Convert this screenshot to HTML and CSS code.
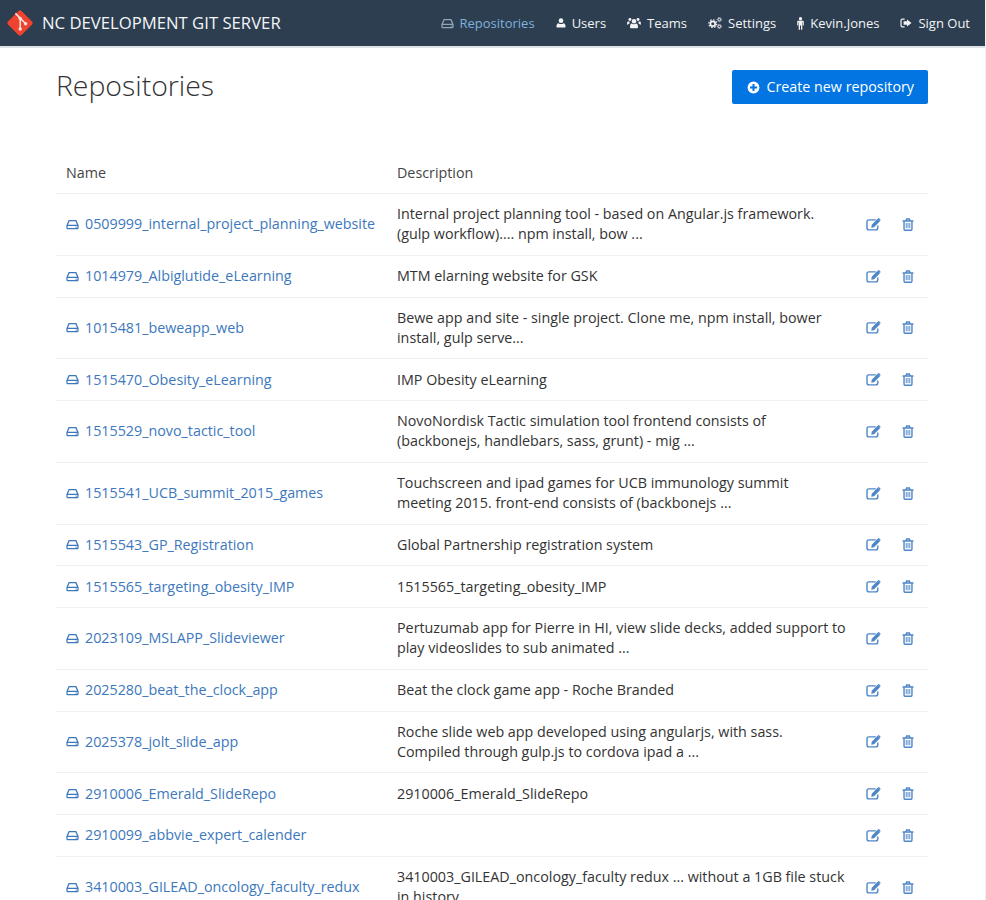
FILE: index.html
```html
<!DOCTYPE html>
<html lang="en">
<head>
<meta charset="utf-8">
<title>Repositories</title>
<link rel="stylesheet" href="styles.css">
</head>
<body>
<svg class="defs" width="0" height="0" aria-hidden="true">
  <symbol id="i-hdd" viewBox="0 0 16 14"><path fill="none" stroke="currentColor" stroke-width="1.6" d="M1 8.2 3.6 2.2h8.8L15 8.2V11.2a1.2 1.2 0 0 1-1.2 1.2H2.2A1.2 1.2 0 0 1 1 11.2zM1 8.2h14"/><circle cx="12.6" cy="10.4" r=".8" fill="currentColor"/></symbol>
  <symbol id="i-user" viewBox="0 0 14 14"><circle cx="7" cy="3.8" r="3.3" fill="currentColor"/><path fill="currentColor" d="M1.6 13.4C.9 13.4.6 12.9.6 12.2.6 9.8 1.4 7.2 3.6 7.2 4.4 8 5.6 8.5 7 8.5s2.6-.5 3.4-1.3c2.2 0 3 2.6 3 5 0 .7-.3 1.2-1 1.2z"/></symbol>
  <symbol id="i-group" viewBox="0 0 18 14"><g fill="currentColor"><circle cx="9" cy="4.6" r="2.9"/><circle cx="3.8" cy="2.6" r="1.9"/><circle cx="14.2" cy="2.6" r="1.9"/><path d="M4.8 13.6c-.7 0-1-.4-1-1 0-2.6.6-5 2.4-5 .7.6 1.7 1 2.8 1s2.1-.4 2.8-1c1.8 0 2.4 2.4 2.4 5 0 .6-.3 1-1 1z"/><path d="M.1 8.4c0-2 .4-3.6 1.4-3.6.5.4 1.3.7 2.1.7-.2.3-.4.7-.4 1.2 0 .3.1.7.2 1-1.1.4-1.9 1-2.3 1.6H.6c-.3 0-.5-.4-.5-.9zM17.9 8.4c0-2-.4-3.6-1.4-3.6-.5.4-1.3.7-2.1.7.2.3.4.7.4 1.2 0 .3-.1.7-.2 1 1.1.4 1.9 1 2.3 1.6h.4c.3 0 .6-.4.6-.9z"/></g></symbol>
  <symbol id="i-cogs" viewBox="0 0 16 14"><g fill="none" stroke="currentColor"><circle cx="5.4" cy="7.8" r="2.8" stroke-width="2"/><circle cx="5.4" cy="7.8" r="4.6" stroke-width="1.4" stroke-dasharray="1.8 1.8"/><circle cx="13" cy="3" r="1.5" stroke-width="1.1"/><circle cx="13" cy="3" r="2.5" stroke-width=".9" stroke-dasharray="1.1 1.1"/><circle cx="13" cy="11" r="1.5" stroke-width="1.1"/><circle cx="13" cy="11" r="2.5" stroke-width=".9" stroke-dasharray="1.1 1.1"/></g></symbol>
  <symbol id="i-male" viewBox="0 0 8 15"><g fill="currentColor"><circle cx="4" cy="2" r="1.9"/><path d="M1.4 4.4h5.2c.7 0 1.2.5 1.2 1.2v3.6c0 .8-1.2.8-1.2 0V6h-.5v8.2c0 1-1.5 1-1.5 0V9.8h-1.2v4.4c0 1-1.5 1-1.5 0V6h-.5v3.2c0 .8-1.2.8-1.2 0V5.6c0-.7.5-1.2 1.2-1.2z"/></g></symbol>
  <symbol id="i-signout" viewBox="0 0 14 14"><path fill="none" stroke="currentColor" stroke-width="1.4" d="M5.4 2.4H3A1.8 1.8 0 0 0 1.2 4.2v5.6A1.8 1.8 0 0 0 3 11.6h2.4"/><path fill="currentColor" d="M8.2 2.8 13.4 7l-5.2 4.2V8.9H4.2V5.1h4z"/></symbol>
  <symbol id="i-plus" viewBox="0 0 14 14"><path fill="currentColor" fill-rule="evenodd" d="M7 .6a6.4 6.4 0 1 1 0 12.8A6.4 6.4 0 0 1 7 .6zM5.9 3.2v2.7H3.2v2.2h2.7v2.7h2.2V8.1h2.7V5.9H8.1V3.2z"/></symbol>
  <symbol id="i-edit" viewBox="0 0 16 14"><path fill="none" stroke="currentColor" stroke-width="1.5" d="M12.6 8.2v2.6a2 2 0 0 1-2 2H3a2 2 0 0 1-2-2V4a2 2 0 0 1 2-2h7.4"/><path fill="currentColor" d="M12.4.9 15 3.4 8.6 9.9 5.6 10.5 6.1 7.4zM13.1.3l.7-.3 1.9 1.9-.3.7-.6.4-2.3-2.3z"/></symbol>
  <symbol id="i-trash" viewBox="0 0 13 14"><g fill="none" stroke="currentColor" stroke-width="1.5"><path d="M.6 3.2h11.8M2.2 3.2v8.6c0 .9.5 1.5 1.2 1.5h6.2c.7 0 1.2-.6 1.2-1.5V3.2M4.2 3.2 5 1.1h3l.8 2.1"/><path stroke-width="1" d="M4.6 5.4v5.6M6.5 5.4v5.6M8.4 5.4v5.6"/></g></symbol>
</svg>
<div class="page">
  <header class="navbar">
    <a class="brand" href="#">
      <svg class="brand-logo" viewBox="0 0 28 28" aria-hidden="true"><rect x="4.4" y="4.4" width="19.2" height="19.2" rx="2.2" transform="rotate(45 14 14)" fill="#f0432f"/><g fill="none" stroke="#fbe4e0" stroke-width="1.5"><path d="M9.4 4.4 20 15M14.2 9.2v11"/></g><g fill="#fbe4e0"><circle cx="14.2" cy="9.4" r="1.7"/><circle cx="14.2" cy="20" r="1.7"/><circle cx="19.6" cy="14.8" r="1.7"/></g></svg>
      <span>NC DEVELOPMENT GIT SERVER</span>
    </a>
    <nav class="nav">
      <a class="nav-link active" href="#"><svg class="ico ico-hdd"><use href="#i-hdd"/></svg>Repositories</a>
      <a class="nav-link" href="#"><svg class="ico ico-user"><use href="#i-user"/></svg>Users</a>
      <a class="nav-link" href="#"><svg class="ico ico-group"><use href="#i-group"/></svg>Teams</a>
      <a class="nav-link" href="#"><svg class="ico ico-cogs"><use href="#i-cogs"/></svg>Settings</a>
      <a class="nav-link" href="#"><svg class="ico ico-male"><use href="#i-male"/></svg>Kevin.Jones</a>
      <a class="nav-link" href="#"><svg class="ico ico-signout"><use href="#i-signout"/></svg>Sign Out</a>
    </nav>
  </header>
  <main class="content">
    <div class="title-row">
      <h1>Repositories</h1>
      <a class="btn" href="#"><svg class="ico ico-plus"><use href="#i-plus"/></svg>Create new repository</a>
    </div>
    <div class="repos">
      <div class="row head"><div class="cell">Name</div><div class="cell">Description</div><div class="cell"></div></div>
      <div class="row"><a class="cell repo" href="#"><svg class="ico ico-hdd"><use href="#i-hdd"/></svg>0509999_internal_project_planning_website</a><div class="cell desc">Internal project planning tool - based on Angular.js framework. (gulp workflow).... npm install, bow ...</div><div class="acts"><svg class="ico ico-edit"><use href="#i-edit"/></svg><svg class="ico ico-trash"><use href="#i-trash"/></svg></div></div>
      <div class="row"><a class="cell repo" href="#"><svg class="ico ico-hdd"><use href="#i-hdd"/></svg>1014979_Albiglutide_eLearning</a><div class="cell desc">MTM elarning website for GSK</div><div class="acts"><svg class="ico ico-edit"><use href="#i-edit"/></svg><svg class="ico ico-trash"><use href="#i-trash"/></svg></div></div>
      <div class="row"><a class="cell repo" href="#"><svg class="ico ico-hdd"><use href="#i-hdd"/></svg>1015481_beweapp_web</a><div class="cell desc">Bewe app and site - single project. Clone me, npm install, bower install, gulp serve...</div><div class="acts"><svg class="ico ico-edit"><use href="#i-edit"/></svg><svg class="ico ico-trash"><use href="#i-trash"/></svg></div></div>
      <div class="row"><a class="cell repo" href="#"><svg class="ico ico-hdd"><use href="#i-hdd"/></svg>1515470_Obesity_eLearning</a><div class="cell desc">IMP Obesity eLearning</div><div class="acts"><svg class="ico ico-edit"><use href="#i-edit"/></svg><svg class="ico ico-trash"><use href="#i-trash"/></svg></div></div>
      <div class="row"><a class="cell repo" href="#"><svg class="ico ico-hdd"><use href="#i-hdd"/></svg>1515529_novo_tactic_tool</a><div class="cell desc">NovoNordisk Tactic simulation tool frontend consists of (backbonejs, handlebars, sass, grunt) - mig ...</div><div class="acts"><svg class="ico ico-edit"><use href="#i-edit"/></svg><svg class="ico ico-trash"><use href="#i-trash"/></svg></div></div>
      <div class="row"><a class="cell repo" href="#"><svg class="ico ico-hdd"><use href="#i-hdd"/></svg>1515541_UCB_summit_2015_games</a><div class="cell desc">Touchscreen and ipad games for UCB immunology summit meeting 2015. front-end consists of (backbonejs ...</div><div class="acts"><svg class="ico ico-edit"><use href="#i-edit"/></svg><svg class="ico ico-trash"><use href="#i-trash"/></svg></div></div>
      <div class="row"><a class="cell repo" href="#"><svg class="ico ico-hdd"><use href="#i-hdd"/></svg>1515543_GP_Registration</a><div class="cell desc">Global Partnership registration system</div><div class="acts"><svg class="ico ico-edit"><use href="#i-edit"/></svg><svg class="ico ico-trash"><use href="#i-trash"/></svg></div></div>
      <div class="row"><a class="cell repo" href="#"><svg class="ico ico-hdd"><use href="#i-hdd"/></svg>1515565_targeting_obesity_IMP</a><div class="cell desc">1515565_targeting_obesity_IMP</div><div class="acts"><svg class="ico ico-edit"><use href="#i-edit"/></svg><svg class="ico ico-trash"><use href="#i-trash"/></svg></div></div>
      <div class="row"><a class="cell repo" href="#"><svg class="ico ico-hdd"><use href="#i-hdd"/></svg>2023109_MSLAPP_Slideviewer</a><div class="cell desc">Pertuzumab app for Pierre in HI, view slide decks, added support to play videoslides to sub animated ...</div><div class="acts"><svg class="ico ico-edit"><use href="#i-edit"/></svg><svg class="ico ico-trash"><use href="#i-trash"/></svg></div></div>
      <div class="row"><a class="cell repo" href="#"><svg class="ico ico-hdd"><use href="#i-hdd"/></svg>2025280_beat_the_clock_app</a><div class="cell desc">Beat the clock game app - Roche Branded</div><div class="acts"><svg class="ico ico-edit"><use href="#i-edit"/></svg><svg class="ico ico-trash"><use href="#i-trash"/></svg></div></div>
      <div class="row"><a class="cell repo" href="#"><svg class="ico ico-hdd"><use href="#i-hdd"/></svg>2025378_jolt_slide_app</a><div class="cell desc">Roche slide web app developed using angularjs, with sass. Compiled through gulp.js to cordova ipad a ...</div><div class="acts"><svg class="ico ico-edit"><use href="#i-edit"/></svg><svg class="ico ico-trash"><use href="#i-trash"/></svg></div></div>
      <div class="row"><a class="cell repo" href="#"><svg class="ico ico-hdd"><use href="#i-hdd"/></svg>2910006_Emerald_SlideRepo</a><div class="cell desc">2910006_Emerald_SlideRepo</div><div class="acts"><svg class="ico ico-edit"><use href="#i-edit"/></svg><svg class="ico ico-trash"><use href="#i-trash"/></svg></div></div>
      <div class="row"><a class="cell repo" href="#"><svg class="ico ico-hdd"><use href="#i-hdd"/></svg>2910099_abbvie_expert_calender</a><div class="cell desc">&nbsp;</div><div class="acts"><svg class="ico ico-edit"><use href="#i-edit"/></svg><svg class="ico ico-trash"><use href="#i-trash"/></svg></div></div>
      <div class="row"><a class="cell repo" href="#"><svg class="ico ico-hdd"><use href="#i-hdd"/></svg>3410003_GILEAD_oncology_faculty_redux</a><div class="cell desc">3410003_GILEAD_oncology_faculty redux ... without a 1GB file stuck in history ...</div><div class="acts"><svg class="ico ico-edit"><use href="#i-edit"/></svg><svg class="ico ico-trash"><use href="#i-trash"/></svg></div></div>
    </div>
  </main>
</div>
</body>
</html>
```
FILE: styles.css
```css
* { box-sizing: border-box; }
html, body { margin: 0; height: 900px; overflow: hidden; }
body {
  background: #eef0f2;
  font-family: "Open Sans", "Liberation Sans", sans-serif;
  font-size: 14.3px;
  line-height: 20px;
  color: #333;
}
.defs { position: absolute; }
.page { width: 985px; height: 900px; background: #fff; }
a { text-decoration: none; }
.ico { display: block; flex: none; }

.navbar {
  height: 48px;
  background: #2d3e50;
  border-bottom: 2px solid #dfe3e8;
  display: flex;
  align-items: center;
  justify-content: space-between;
  padding: 0 15px 0 6px;
}
.brand { display: flex; align-items: center; gap: 8px; color: #f4f6f8; font-size: 16.7px; }
.brand-logo { width: 28px; height: 28px; display: block; }
.nav { display: flex; align-items: center; gap: 21px; }
.nav-link { display: flex; align-items: center; gap: 6px; color: #f2f4f6; font-size: 13px; font-weight: 500; }
.nav-link.active { color: #7fb1dc; }
.nav-link.active .ico { color: #8ea6bb; }
.ico-hdd { width: 13px; height: 11px; }
.ico-user { width: 10px; height: 12px; }
.ico-group { width: 14px; height: 12px; }
.ico-cogs { width: 14px; height: 12px; }
.ico-male { width: 7px; height: 13px; }
.ico-signout { width: 12px; height: 12px; }
.ico-plus { width: 13px; height: 13px; }
.ico-edit { width: 15px; height: 13px; }
.ico-trash { width: 12px; height: 13px; }

.content { padding: 22px 57px 0 56px; }
.title-row { display: flex; justify-content: space-between; align-items: flex-start; height: 34px; margin-bottom: 59px; }
h1 { margin: 0; font-size: 28.4px; font-weight: 300; line-height: 30px; color: #333; }
.btn {
  display: flex; align-items: center; gap: 6px;
  height: 34px; padding: 0 14px 0 15px;
  background: #0275e3;
  color: #fff;
  border-radius: 2px;
  font-size: 14.3px;
  font-weight: 500;
}

.repos { width: 872px; }
.row {
  display: grid;
  grid-template-columns: 331px 469px 72px;
  align-items: center;
  border-top: 1px solid #f0f1f2;
  padding: 10.385px 0;
}
.row.head { border-top: 0; padding: 0 0 10px; color: #444; }
.cell { padding: 0 10px; }
.repo { display: flex; align-items: center; gap: 6px; color: #3d78bd; white-space: nowrap; }
.acts { display: flex; align-items: center; padding-left: 10px; color: #4f86c6; }
.ico-edit { margin-right: 21px; }
```
